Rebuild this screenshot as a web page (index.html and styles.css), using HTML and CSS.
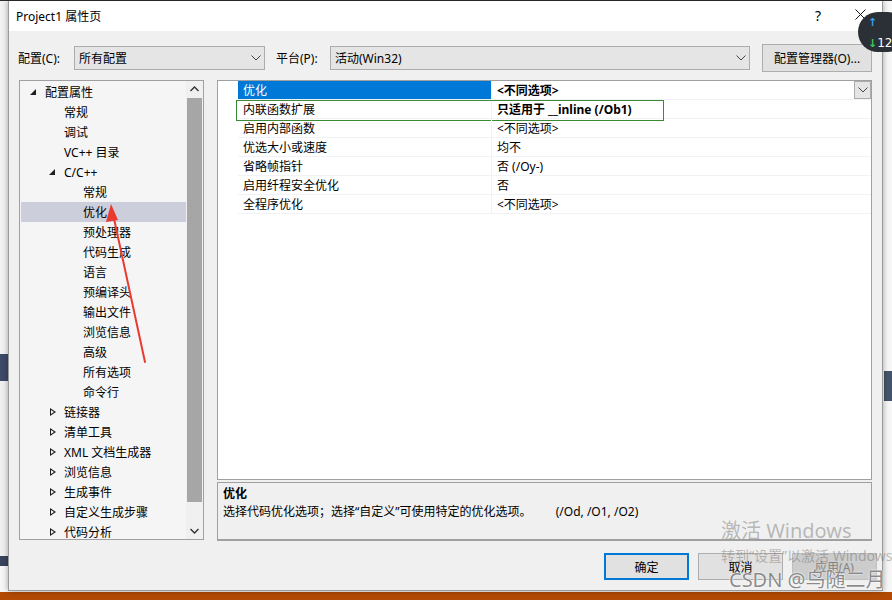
FILE: index.html
```html
<html>
  <head>
    <title>Project1 属性页</title>
    <link rel="stylesheet" href="styles.css">
  </head>

  <body>
    <div id="desktop">
      <div id="fundo"></div>
      <div id="barraTarefas"></div>

      <div id="dialogo">
        <div id="tituloBarra">
          <span class="titulo">Project1 属性页</span>
          <span class="ajuda">?</span>
          <span class="fechar">
            <svg width="11" height="11" viewBox="0 0 11 11"><path d="M0.5 0.5 L10.5 10.5 M10.5 0.5 L0.5 10.5" stroke="#111" stroke-width="1" fill="none"/></svg>
          </span>
        </div>

        <div id="corpo">
          <div class="linhaConfig">
            <label class="rotulo rotuloConfig">配置(C):</label>
            <div class="combo comboConfig">
              <span>所有配置</span>
              <svg class="seta" width="10" height="6" viewBox="0 0 10 6"><polyline points="0.5,0.5 5,5 9.5,0.5" stroke="#444" fill="none"/></svg>
            </div>
            <label class="rotulo rotuloPlataforma">平台(P):</label>
            <div class="combo comboPlataforma">
              <span>活动(Win32)</span>
              <svg class="seta" width="10" height="6" viewBox="0 0 10 6"><polyline points="0.5,0.5 5,5 9.5,0.5" stroke="#444" fill="none"/></svg>
            </div>
            <button class="botaoGerenciador">配置管理器(O)...</button>
          </div>

          <div class="principal">
            <div class="arvore">
              <div class="listaArvore">
                <div class="item nivel0"><span class="toggle aberto"></span>配置属性</div>
                <div class="item nivel1"><span class="toggle"></span>常规</div>
                <div class="item nivel1"><span class="toggle"></span>调试</div>
                <div class="item nivel1"><span class="toggle"></span>VC++ 目录</div>
                <div class="item nivel1"><span class="toggle aberto"></span>C/C++</div>
                <div class="item nivel2"><span class="toggle"></span>常规</div>
                <div class="item nivel2 selecionado"><span class="toggle"></span>优化</div>
                <div class="item nivel2"><span class="toggle"></span>预处理器</div>
                <div class="item nivel2"><span class="toggle"></span>代码生成</div>
                <div class="item nivel2"><span class="toggle"></span>语言</div>
                <div class="item nivel2"><span class="toggle"></span>预编译头</div>
                <div class="item nivel2"><span class="toggle"></span>输出文件</div>
                <div class="item nivel2"><span class="toggle"></span>浏览信息</div>
                <div class="item nivel2"><span class="toggle"></span>高级</div>
                <div class="item nivel2"><span class="toggle"></span>所有选项</div>
                <div class="item nivel2"><span class="toggle"></span>命令行</div>
                <div class="item nivel1"><span class="toggle fechado"></span>链接器</div>
                <div class="item nivel1"><span class="toggle fechado"></span>清单工具</div>
                <div class="item nivel1"><span class="toggle fechado"></span>XML 文档生成器</div>
                <div class="item nivel1"><span class="toggle fechado"></span>浏览信息</div>
                <div class="item nivel1"><span class="toggle fechado"></span>生成事件</div>
                <div class="item nivel1"><span class="toggle fechado"></span>自定义生成步骤</div>
                <div class="item nivel1"><span class="toggle fechado"></span>代码分析</div>
              </div>
              <div class="rolagem">
                <div class="rolagemSeta">
                  <svg width="9" height="6" viewBox="0 0 9 6"><polyline points="0.5,5 4.5,1 8.5,5" stroke="#333" stroke-width="1.4" fill="none"/></svg>
                </div>
                <div class="rolagemPolegar"></div>
                <div class="rolagemSeta">
                  <svg width="9" height="6" viewBox="0 0 9 6"><polyline points="0.5,1 4.5,5 8.5,1" stroke="#333" stroke-width="1.4" fill="none"/></svg>
                </div>
              </div>
            </div>

            <div class="colunaDireita">
              <div class="grade">
                <div class="linha selecionada">
                  <div class="nome">优化</div>
                  <div class="valor negrito">&lt;不同选项&gt;
                    <span class="botaoLista">
                      <svg width="10" height="6" viewBox="0 0 10 6"><polyline points="0.5,0.5 5,5 9.5,0.5" stroke="#444" fill="none"/></svg>
                    </span>
                  </div>
                </div>
                <div class="linha foco">
                  <div class="nome">内联函数扩展</div>
                  <div class="valor negrito">只适用于 __inline (/Ob1)</div>
                </div>
                <div class="linha">
                  <div class="nome">启用内部函数</div>
                  <div class="valor">&lt;不同选项&gt;</div>
                </div>
                <div class="linha">
                  <div class="nome">优选大小或速度</div>
                  <div class="valor">均不</div>
                </div>
                <div class="linha">
                  <div class="nome">省略帧指针</div>
                  <div class="valor">否 (/Oy-)</div>
                </div>
                <div class="linha">
                  <div class="nome">启用纤程安全优化</div>
                  <div class="valor">否</div>
                </div>
                <div class="linha">
                  <div class="nome">全程序优化</div>
                  <div class="valor">&lt;不同选项&gt;</div>
                </div>
              </div>
              <div class="descricao">
                <div class="descTitulo">优化</div>
                <div class="descTexto">
                  <span>选择代码优化选项；选择“自定义”可使用特定的优化选项。</span>
                  <span class="descOpcoes">(/Od, /O1, /O2)</span>
                </div>
              </div>
            </div>
          </div>

          <div class="botoes">
            <button class="botao padrao">确定</button>
            <button class="botao">取消</button>
            <button class="botao desativado">应用(A)</button>
          </div>
        </div>
      </div>

      <div id="rede">
        <span class="subir">↑</span>
        <span class="descer"><b>↓</b>12.</span>
      </div>

      <svg id="seta" width="892" height="600" viewBox="0 0 892 600">
        <line x1="145" y1="362" x2="113" y2="214" stroke="#ea3a30" stroke-width="2" stroke-linecap="round"/>
        <polygon points="111,204 106,222 118,220" fill="#ea3a30"/>
      </svg>

      <div id="marcaAgua">
        <div class="ativar">激活 Windows</div>
        <div class="ativarSub">转到“设置”以激活 Windows。</div>
      </div>
      <div id="csdn">CSDN @鸟随二月</div>
    </div>
  </body>
</html>
```

FILE: styles.css
```css
* {
  margin: 0;
  padding: 0;
  box-sizing: border-box;
}

body {
  font-family: "Noto Sans", "Noto Sans CJK SC", sans-serif;
  font-size: 12px;
  color: #000;
  overflow: hidden;
}

#desktop {
  position: relative;
  width: 892px;
  height: 600px;
  display: flex;
  flex-direction: column;
  background: #2d2d30;
}

#fundo {
  flex: 1;
  margin-top: 1px;
  background:
    linear-gradient(#f2f2f2, #f2f2f2) 0 0 / 8px 353px no-repeat,
    linear-gradient(#3d4a68, #3d4a68) 0 353px / 8px 27px no-repeat,
    linear-gradient(#f0f0f0, #f0f0f0) 0 380px / 8px 175px no-repeat,
    linear-gradient(#39435c, #39435c) 0 555px / 8px 10px no-repeat,
    linear-gradient(#44546a, #44546a) 884px 370px / 8px 30px no-repeat,
    #f7f7f7;
}

#barraTarefas {
  height: 8px;
  background: #b24a05;
}

/* janela do dialogo sobre a area de trabalho */
#dialogo {
  position: absolute;
  left: 8px;
  top: 1px;
  width: 875px;
  height: 590px;
  background: #f0f0f0;
  border: 1px solid #9a9a9a;
  border-top: 0;
  box-shadow: 0 0 6px rgba(0, 0, 0, 0.35);
  display: flex;
  flex-direction: column;
}

#tituloBarra {
  height: 30px;
  background: #fff;
  display: flex;
  align-items: center;
  padding-left: 7px;
  padding-bottom: 1px;
}

#tituloBarra .titulo {
  flex: 1;
  font-size: 12px;
}

#tituloBarra .ajuda {
  font-size: 14px;
  width: 12px;
  margin-right: 28px;
}

#tituloBarra .fechar {
  width: 11px;
  height: 11px;
  margin-right: 16px;
  margin-top: -2px;
  display: flex;
}

#corpo {
  flex: 1;
  padding: 13px 10px 0 9px;
  display: flex;
  flex-direction: column;
}

.linhaConfig {
  height: 28px;
  display: flex;
  align-items: center;
}

.rotulo {
  white-space: nowrap;
}

.rotuloConfig {
  width: 56px;
}

.rotuloPlataforma {
  width: 54px;
  margin-left: 11px;
}

.combo {
  height: 24px;
  background: #e5e5e5;
  border: 1px solid #acacac;
  display: flex;
  align-items: center;
  justify-content: space-between;
  padding: 0 3px 0 4px;
}

.comboConfig {
  width: 191px;
}

.comboPlataforma {
  width: 420px;
}

.botaoGerenciador {
  width: 110px;
  height: 28px;
  margin-left: 12px;
  background: #e1e1e1;
  border: 1px solid #adadad;
  font-family: inherit;
  font-size: 12px;
}

.principal {
  margin-top: 8px;
  height: 461px;
  display: flex;
  align-items: flex-start;
}

.arvore {
  width: 185px;
  height: 460px;
  margin-left: 1px;
  border: 1px solid #a0a0a0;
  background: #f5f5f5;
  display: flex;
  overflow: hidden;
}

.listaArvore {
  flex: 1;
  padding: 1px 0 0 1px;
}

.item {
  height: 20px;
  display: flex;
  align-items: center;
  white-space: nowrap;
}

.nivel0 { padding-left: 7px; }
.nivel1 { padding-left: 26px; }
.nivel2 { padding-left: 45px; }

.item.selecionado {
  background: #cccedb;
}

.toggle {
  width: 17px;
  height: 20px;
  position: relative;
}

.toggle.aberto::before {
  content: "";
  position: absolute;
  left: 2px;
  top: 7px;
  border-style: solid;
  border-width: 0 0 6px 6px;
  border-color: transparent transparent #1e1e1e transparent;
}

.toggle.fechado::before {
  content: "";
  position: absolute;
  left: 3px;
  top: 6px;
  width: 0;
  height: 0;
  border-style: solid;
  border-width: 4px 0 4px 6px;
  border-color: transparent transparent transparent #1e1e1e;
}

.toggle.fechado::after {
  content: "";
  position: absolute;
  left: 4px;
  top: 8px;
  border-style: solid;
  border-width: 2px 0 2px 3px;
  border-color: transparent transparent transparent #f5f5f5;
}

.rolagem {
  width: 17px;
  background: #f0f0f0;
  display: flex;
  flex-direction: column;
  align-items: center;
}

.rolagemSeta {
  height: 17px;
  width: 17px;
  display: flex;
  align-items: center;
  justify-content: center;
}

.rolagemPolegar {
  width: 15px;
  height: 406px;
  background: #a6a6a6;
  margin-bottom: 20px;
}

.colunaDireita {
  width: 655px;
  margin-left: 13px;
  display: flex;
  flex-direction: column;
  gap: 2px;
}

.grade {
  height: 400px;
  background: #fff;
  border: 1px solid #a0a0a0;
  padding-left: 20px;
}

.linha {
  height: 19px;
  display: flex;
  border-bottom: 1px solid #f0f2f5;
  position: relative;
}

.linha .nome {
  width: 253px;
  padding-left: 5px;
  line-height: 20px;
  white-space: nowrap;
}

.linha .valor {
  flex: 1;
  padding-left: 5px;
  line-height: 20px;
  border-left: 1px solid #f0f2f5;
  white-space: nowrap;
  display: flex;
  justify-content: space-between;
}

.negrito {
  font-weight: bold;
}

.linha.selecionada .nome {
  background: #0078d7;
  color: #fff;
}

.botaoLista {
  width: 17px;
  height: 18px;
  background: #e5e5e5;
  border: 1px solid #acacac;
  display: flex;
  align-items: center;
  justify-content: center;
}

/* retangulo de foco verde */
.linha.foco::after {
  content: "";
  position: absolute;
  left: -2px;
  top: 0;
  width: 426px;
  height: 19px;
  border: 1px solid #3a8a36;
}

.descricao {
  height: 59px;
  border: 1px solid #a0a0a0;
  border-bottom-width: 2px;
  padding: 2px 5px;
  background: #f0f0f0;
}

.descTitulo {
  font-weight: bold;
  line-height: 18px;
}

.descTexto {
  line-height: 18px;
  white-space: nowrap;
}

.descOpcoes {
  margin-left: 21px;
}

.botoes {
  margin-top: 12px;
  margin-right: -5px;
  display: flex;
  justify-content: flex-end;
  gap: 9px;
}

.botao {
  width: 85px;
  height: 27px;
  background: #e1e1e1;
  border: 1px solid #adadad;
  font-family: inherit;
  font-size: 12px;
  color: #000;
}

.botao.padrao {
  border: 2px solid #0078d7;
}

.botao.desativado {
  background: #cccccc;
  border-color: #bfbfbf;
  color: #838383;
}

/* indicador de rede no canto */
#rede {
  position: absolute;
  left: 858px;
  top: 12px;
  width: 50px;
  height: 40px;
  border-radius: 20px;
  background: #2b2f36;
  display: flex;
  flex-direction: column;
  padding: 1px 0 0 10px;
  font-family: "DejaVu Sans", sans-serif;
  font-size: 12px;
  line-height: 20px;
  color: #fff;
}

#rede .subir {
  color: #3aa0f0;
  font-weight: bold;
  font-size: 11px;
}

#rede .descer b {
  color: #3cc85a;
  font-size: 11px;
}

#seta {
  position: absolute;
  left: 0;
  top: 0;
}

#marcaAgua {
  position: absolute;
  left: 721px;
  top: 517px;
  color: rgba(110, 110, 110, 0.45);
  white-space: nowrap;
}

#marcaAgua .ativar {
  font-size: 20px;
  line-height: 28px;
}

#marcaAgua .ativarSub {
  font-size: 14px;
  line-height: 22px;
}

#csdn {
  position: absolute;
  left: 729px;
  top: 566px;
  font-size: 20px;
  line-height: 28px;
  color: rgba(100, 100, 100, 0.75);
  text-shadow: 0 0 2px #fff, 0 0 1px #fff;
  white-space: nowrap;
}
```
